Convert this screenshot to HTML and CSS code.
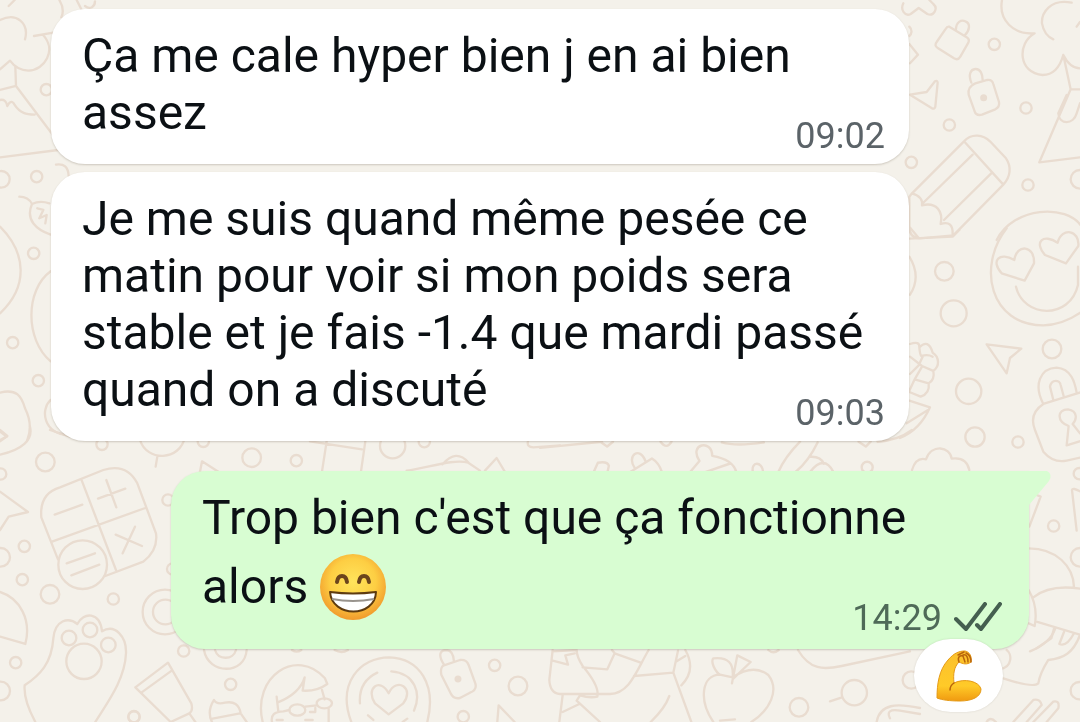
FILE: index.html
```html
<!DOCTYPE html>
<html lang="fr">
<head>
    <meta charset="UTF-8">
    <meta name="viewport" content="width=device-width, initial-scale=1.0">
    <title>Discussion</title>
    <link rel="stylesheet" href="styles.css">
</head>
<body>
    <svg class="wallpaper" viewBox="0 0 1080 722" preserveAspectRatio="xMidYMid slice" aria-hidden="true">
        <!-- top right: flower, locks, pencil -->
        <g transform="translate(900 0) scale(.3333)">
            <path d="M10 10C0 30 15 50 32 42L56 24L82 42C102 50 115 25 100 12L88 0M28 80C38 90 35 102 28 108M28 132L54 164L30 190"/>
            <path d="M148 80L200 112Q210 118 205 128L181 170Q174 182 162 175L112 143Q102 136 110 126L136 88Q142 78 148 80ZM168 88C168 66 184 58 196 64C212 70 210 90 194 106"/>
            <path d="M226 250L262 240Q276 238 280 252L297 306Q300 320 286 328L246 344Q228 348 224 334L206 284Q202 260 226 250ZM214 248C204 224 212 208 226 207C242 206 248 224 248 240"/>
            <circle class="dot" cx="251" cy="293" r="7"/>
            <circle cx="283" cy="133" r="17"/><circle cx="378" cy="324" r="17"/><circle cx="148" cy="375" r="17"/><circle cx="34" cy="487" r="17"/><circle cx="384" cy="555" r="17"/><circle cx="540" cy="538" r="28"/>
            <path d="M30 284L80 276L105 244Q112 240 113 248L106 320Q104 328 96 325Z"/>
            <path d="M36 580L192 424C215 398 250 404 270 424L318 475C335 500 332 530 310 554L160 706L60 715Q28 714 28 680V590ZM192 424L310 554M218 464L66 612M276 518L132 660M36 580Q70 590 66 616C110 605 130 635 122 672Q160 660 158 704M28 680L56 714"/>
            <path d="M306 0C295 60 340 105 404 100C350 130 355 220 428 225C460 225 480 200 490 165Q510 205 540 205M515 8C450-5 424 40 426 70Q432 105 460 118M490 165L512 268L418 487L540 472M512 268H540M500 285L475 340C478 375 520 375 530 340L540 310M530 80L540 66"/>
            <path d="M290 720C340 620 500 610 545 680"/>
        </g>
        <!-- right: smiley, plane, padlock -->
        <g transform="translate(900 230) scale(.3333)">
            <path d="M320-5C230 110 270 286 430 286Q490 284 545 245M374 152L305 130C270 90 300 65 343 90C350 40 405 45 402 100ZM498 100L435 75C400 35 430 10 473 38C485-10 540 0 535 48ZM348 170C370 265 510 270 534 165V110"/>
            <circle cx="133" cy="124" r="28"/><circle cx="161" cy="250" r="39"/><circle cx="456" cy="357" r="28"/><circle cx="206" cy="484" r="38"/><circle cx="225" cy="621" r="29"/><circle cx="354" cy="636" r="17"/>
            <path d="M28 80Q65 140 30 194M28 26L158 20L178 0M260 343L364 356L330 384L320 430Z"/>
            <path d="M30 342Q60 332 58 352Q85 325 98 368C118 380 120 410 100 422Q105 450 86 460Q90 490 62 500L28 486M58 352Q60 375 64 378Q84 372 98 380M30 380L66 408L98 422M68 380L56 406L30 432M66 410L44 448L86 460M44 448L28 482M28 512L90 532Q60 600 0 624M84 540L20 580"/>
            <path d="M430 522C400 465 420 415 470 413C515 416 525 460 530 488M460 510L450 470C455 445 480 450 482 465L492 502M545 486L430 522C395 545 395 575 405 600L430 665Q460 700 500 692L545 682M500 646L506 588C470 575 470 538 504 538C535 543 530 570 518 582L540 610M500 646L545 632"/>
            <path d="M36 720Q48 680 78 688C95 640 150 650 155 686Q200 680 208 720"/>
        </g>
        <!-- top left: flower, envelope, bird -->
        <g transform="scale(.3333)">
            <path d="M178 0C190 20 192 35 184 52M26 18L44 0M0 60C50 35 88 70 75 118M102 108L160 98M130 106C170 150 135 210 85 212Q50 210 30 182L0 208M46 200L48 258L0 270M48 258L170 420M0 472L175 450M0 300Q18 296 22 318Q34 295 44 315C60 340 80 343 104 344M230 0L244 28M255 18C270 30 285 20 285 4"/>
            <circle cx="139" cy="269" r="17"/><circle cx="4" cy="538" r="25"/><circle cx="110" cy="530" r="17"/><circle cx="101" cy="760" r="17"/><circle cx="38" cy="1028" r="17"/><circle cx="115" cy="1142" r="17"/>
            <path d="M168 494Q204 488 206 528M58 590Q85 590 96 612Q120 600 148 610M96 612C75 660 110 690 152 704M112 625L130 630L118 655L140 645L136 670M0 680C80 760 85 860 0 940M152 814C75 870 75 1020 152 1084M0 1178C50 1165 65 1190 75 1225Q100 1275 82 1320M0 1295L20 1310L0 1320M152 1200C120 1230 130 1300 205 1306"/>
        </g>
        <!-- bottom left: calculator, paw -->
        <g transform="translate(0 430) scale(.3333)">
            <path d="M0 74C65 60 100 30 90-10M0 0L22 18L0 34M150 0L210 20"/>
            <circle cx="136" cy="96" r="28"/><circle cx="2" cy="132" r="17"/><circle cx="73" cy="349" r="17"/><circle cx="2" cy="382" r="28"/><circle cx="67" cy="449" r="17"/><circle cx="150" cy="493" r="28"/><circle cx="340" cy="507" r="17"/><circle cx="47" cy="698" r="17"/><circle cx="2" cy="783" r="28"/><circle cx="306" cy="43" r="17"/><circle cx="504" cy="210" r="17"/><circle cx="518" cy="417" r="17"/><circle cx="402" cy="861" r="17"/>
            <path d="M174 388L124 262Q118 190 180 172L310 120Q380 98 412 160L468 310Q475 360 430 395L316 438M244 148L348 420M156 335L436 234M164 254L247 224M294 206L376 176M319 150L349 232M347 314L426 348M405 290L368 370M200 400L285 370M214 436L298 404"/>
            <circle cx="248" cy="404" r="73"/>
            <path d="M0 185L84 246L26 260L0 300M0 486C60 505 95 570 76 642L0 620"/>
            <path d="M106 876Q70 810 74 766C120 735 155 700 160 625C165 570 205 560 232 582C250 545 300 545 306 604C345 580 380 620 378 670C375 750 320 820 286 876"/>
            <circle cx="252" cy="694" r="53"/><circle cx="207" cy="624" r="22"/><circle cx="270" cy="600" r="22"/><circle cx="325" cy="645" r="22"/>
            <circle cx="495" cy="546" r="67"/><circle cx="496" cy="546" r="37"/>
            <path d="M420 30C440 95 540 95 555 20M472 80L467 110"/>
        </g>
        <!-- strip between received and sent bubbles -->
        <g transform="translate(160 430) scale(.3333)">
            <circle cx="130" cy="34" r="17"/><circle cx="275" cy="83" r="28"/><circle cx="409" cy="92" r="17"/><circle cx="698" cy="47" r="38"/><circle cx="793" cy="35" r="17"/>
            <path d="M120 125L126 94L175 125M450 34L606 58M500 34L486 125M616 34L603 125M740 122C800 115 880 85 925 98L960 122M848 103Q888 55 926 98M975 122L1010 84L1034 124M1104 34Q1100 52 1120 52L1200 46"/>
        </g>
        <g transform="translate(540 430) scale(.3444)">
            <path d="M0 52L180 34M175 34L195 48L212 34M350 34Q368 58 382 34M156 122L168 95Q196 90 200 104L196 122M262 122L325 83Q345 95 354 122M275 110C250 75 290 45 306 90M436 122L463 90C430 40 500 25 500 75Q560 85 570 122M480 122L550 98M618 122C612 90 645 90 648 122M692 122Q710 80 755 34M742 122Q780 90 806 36M782 78Q815 75 824 98M784 122Q825 70 852 122M528 36Q570 48 650 36M925 34L946 48L960 34M980 34Q1040 30 1080 0"/>
            <circle cx="950" cy="108" r="16"/>
        </g>
        <!-- bottom: cup, portrait, heart badge -->
        <g transform="translate(130 640) scale(.3333)">
            <circle cx="161" cy="33" r="17"/><circle cx="302" cy="133" r="17"/><circle cx="12" cy="230" r="17"/><circle cx="1094" cy="76" r="17"/><circle cx="1164" cy="138" r="28"/><circle cx="1000" cy="230" r="17"/>
            <path d="M16 142L114 68L184 190Q190 212 178 220L122 246L16 142M34 158L122 94M178 220L196 246M222 30C235 105 345 105 350 30M255 30C265 62 310 60 318 30"/>
            <path d="M246 246Q230 215 252 180Q260 195 285 188Q325 180 332 220L350 246M248 236L330 220M398 246C365 110 500 20 585 115L592 132Q560 155 518 152L524 112Q510 160 442 188L440 170L445 215M426 246Q420 215 460 214L478 210M526 200L560 196M576 150L584 178M596 206V246M540 216H556V204M440 240H458M526 240H548"/>
            <ellipse cx="502" cy="210" rx="24" ry="17"/><ellipse cx="583" cy="190" rx="23" ry="15"/>
            <path d="M664 246C620 130 690 52 778 52C870 55 920 135 892 246M776 223L735 190C705 145 750 110 776 160C800 108 855 145 820 190ZM690 190Q685 125 742 98M784 94C855 100 875 160 852 212M714 226L730 240M832 236L818 246"/>
            <path d="M942 76L990 60Q1010 58 1016 75L1036 130Q1042 150 1020 158L990 174Q970 178 962 160L934 104Q930 82 942 76ZM942 74C920 40 935 30 950 30Q970 32 972 64M1102 246L1106 196L1154 246M486 30Q500 40 514 30M614 30Q635 42 654 30"/>
            <circle class="dot" cx="984" cy="117" r="7"/>
        </g>
        <!-- bottom: box, apple, comet -->
        <g transform="translate(520 640) scale(.3333)">
            <path d="M98 30L88 120Q90 160 120 162H270C330 160 350 90 386 30M98 62L144 74L136 46L164 40M98 34L170 30Q170 50 188 78Q240 140 232 170Q210 175 180 166L170 182L240 246M188 82L262 88L284 40L276 30M284 40L362 68M342 108L460 98L474 32M460 98L514 246M496 30Q530 90 484 136M470 64L496 48M128 165L118 246M128 216L178 192M448 168Q435 205 392 246"/>
            <path d="M580 246C535 180 545 105 600 104L638 112Q700 70 745 105C780 150 750 210 694 246M636 130L652 46L692 66L640 116M598 104C575 80 575 60 580 55C625 50 642 70 638 112M600 242L645 238"/>
            <path d="M834 30C870 90 910 90 965 78L1170 34M930 184L966 172M1070 246C1080 190 1130 190 1200 204M1110 235Q1095 205 1140 212L1200 222M745 30Q760 44 776 30"/>
            <circle cx="1003" cy="158" r="38"/><circle cx="837" cy="202" r="28"/><circle cx="1174" cy="120" r="26"/>
        </g>
        <!-- bottom right: mushroom, shells, hand -->
        <g transform="translate(940 460) scale(.3333)">
            <path d="M266 265C350 265 400 320 402 380M280 412C320 380 380 380 420 386M266 390Q295 440 284 498L266 490M292 486L420 524M342 506L334 535L290 565M372 516L358 552Q380 562 402 520M268 200L302 110L290 105M410 212L396 90Q398 82 420 94"/>
            <circle cx="341" cy="198" r="17"/><circle cx="418" cy="41" r="17"/><circle cx="420" cy="292" r="28"/>
        </g>
        <g transform="translate(840 590) scale(.3333)">
            <path d="M646 115Q630 160 570 184M720 135C700 190 670 205 625 210Q600 250 595 280Q580 295 490 265M480 238C520 230 515 190 500 180M520 396L580 330Q600 325 605 345L560 396M580 396L640 335Q660 330 655 355L620 396M440 396Q450 378 468 396"/>
            <circle cx="718" cy="302" r="26"/>
        </g>
    </svg>

    <main class="chat">
        <article class="message received">
            <p class="text">Ça me cale hyper bien j en ai bien assez</p>
            <div class="meta"><time datetime="09:02">09:02</time></div>
        </article>
        <article class="message received">
            <p class="text">Je me suis quand même pesée ce matin pour voir si mon poids sera stable et je fais -1.4 que mardi passé quand on a discuté</p>
            <div class="meta"><time datetime="09:03">09:03</time></div>
        </article>
        <article class="message sent">
            <p class="text">Trop bien c'est que ça fonctionne alors
                <svg class="emoji" viewBox="0 0 66 66" role="img" aria-label="Sourire">
                    <defs>
                        <radialGradient id="face" cx=".5" cy=".42" r=".58">
                            <stop offset="0" stop-color="#ffe45c"/>
                            <stop offset=".6" stop-color="#fdce43"/>
                            <stop offset="1" stop-color="#f19a2c"/>
                        </radialGradient>
                    </defs>
                    <circle cx="33" cy="33" r="33" fill="url(#face)"/>
                    <path d="M17 28C18 20 26 20 27 28M39 28C40 20 48 20 49 28" fill="none" stroke="#6b441c" stroke-width="4" stroke-linecap="round"/>
                    <path d="M10 38Q33 41 56 38C55 64 12 64 10 38Z" fill="#fff" stroke="#5e3b10" stroke-width="2" stroke-linejoin="round"/>
                    <path d="M12 45Q33 49 54 45" fill="none" stroke="#99948e" stroke-width="2"/>
                </svg>
            </p>
            <div class="meta">
                <time datetime="14:29">14:29</time>
                <svg class="ticks" viewBox="0 0 48 32" role="img" aria-label="Distribué">
                    <path d="M2 17L12 27L31 2M23 23L27 27L46 2"/>
                </svg>
            </div>
            <button class="reaction" type="button" aria-label="Réaction : biceps">
                <svg class="biceps" viewBox="0 0 46 52" aria-hidden="true">
                    <defs>
                        <linearGradient id="skin" x1="0" y1="0" x2="0" y2="1">
                            <stop offset="0" stop-color="#fbc02d"/>
                            <stop offset=".7" stop-color="#ffca28"/>
                            <stop offset="1" stop-color="#f09a10"/>
                        </linearGradient>
                    </defs>
                    <path d="M1 48C1 34 3 20 12 10C18 3 23 1 29 1C34 2 36 7 35 12C31 15 27 14 23 12C18 17 17 24 18 33C28 28 43 31 45 39C45 47 36 51 24 51C14 51 6 50 1 48Z" fill="url(#skin)" stroke="#e59a16"/>
                    <path d="M23 12C21 7 24 5 27 6L29 12M27 5C31 4 32 8 32 12M30 3C35 5 35 9 35 12M22 5L28 2M18 33C15 35 14 37 14 40" fill="none" stroke="#b9650b" stroke-width="1.5" stroke-linecap="round"/>
                </svg>
            </button>
        </article>
    </main>
</body>
</html>
```
FILE: styles.css
```css
* {
    box-sizing: border-box;
}
body {
    margin: 0;
    min-height: 100vh;
    background: #f4f1ea;
    color: #0b1014;
    font-family: Roboto, "Liberation Sans", sans-serif;
    overflow: hidden;
}
.wallpaper {
    position: fixed;
    inset: 0;
    width: 100%;
    height: 100%;
    z-index: -1;
    fill: none;
    stroke: #e9dcd0;
    stroke-width: 7;
    stroke-linecap: round;
    stroke-linejoin: round;
}
.wallpaper .dot {
    fill: #e9dcd0;
}
.chat {
    display: flex;
    flex-direction: column;
    gap: 8px;
    padding: 9px 51px;
}
.message {
    position: relative;
    max-width: 858px;
    padding: 18px 24px 7px 31px;
    border-radius: 34px;
    box-shadow: 0 1px 2px rgba(90, 80, 60, 0.25);
}
.received {
    align-self: flex-start;
    background: #ffffff;
}
.sent {
    align-self: flex-end;
    margin-top: 22px;
    padding-right: 27px;
    padding-bottom: 10px;
    border-top-right-radius: 0;
    background: #d8fdd2;
}
.sent::after {
    content: "";
    position: absolute;
    top: 0;
    left: 100%;
    width: 22px;
    height: 34px;
    background: #d8fdd2;
    clip-path: path("M-1 0H18Q24 3 20 10L0 34H-1Z");
}
.text {
    margin: 0;
    font-size: 48px;
    line-height: 57px;
}
.emoji {
    width: 66px;
    height: 66px;
    margin: 8px 0 7px;
    vertical-align: -24px;
}
.meta {
    display: flex;
    justify-content: flex-end;
    align-items: center;
    gap: 12px;
    margin-top: -26px;
    color: #5b6368;
    font-size: 36px;
    line-height: 42px;
}
.sent .meta {
    margin-top: -30px;
    color: #4f6a58;
}
.ticks {
    width: 48px;
    height: 32px;
    fill: none;
    stroke: #455f50;
    stroke-width: 4;
    stroke-linecap: round;
    stroke-linejoin: round;
}
.reaction {
    position: absolute;
    top: calc(100% - 10px);
    right: 26px;
    display: flex;
    justify-content: center;
    align-items: center;
    width: 89px;
    height: 73px;
    padding: 0;
    border: 0;
    border-radius: 37px;
    background: #ffffff;
    box-shadow: 0 0 2px rgba(90, 80, 60, 0.2);
    cursor: pointer;
}
.biceps {
    width: 46px;
    height: 52px;
}
```
